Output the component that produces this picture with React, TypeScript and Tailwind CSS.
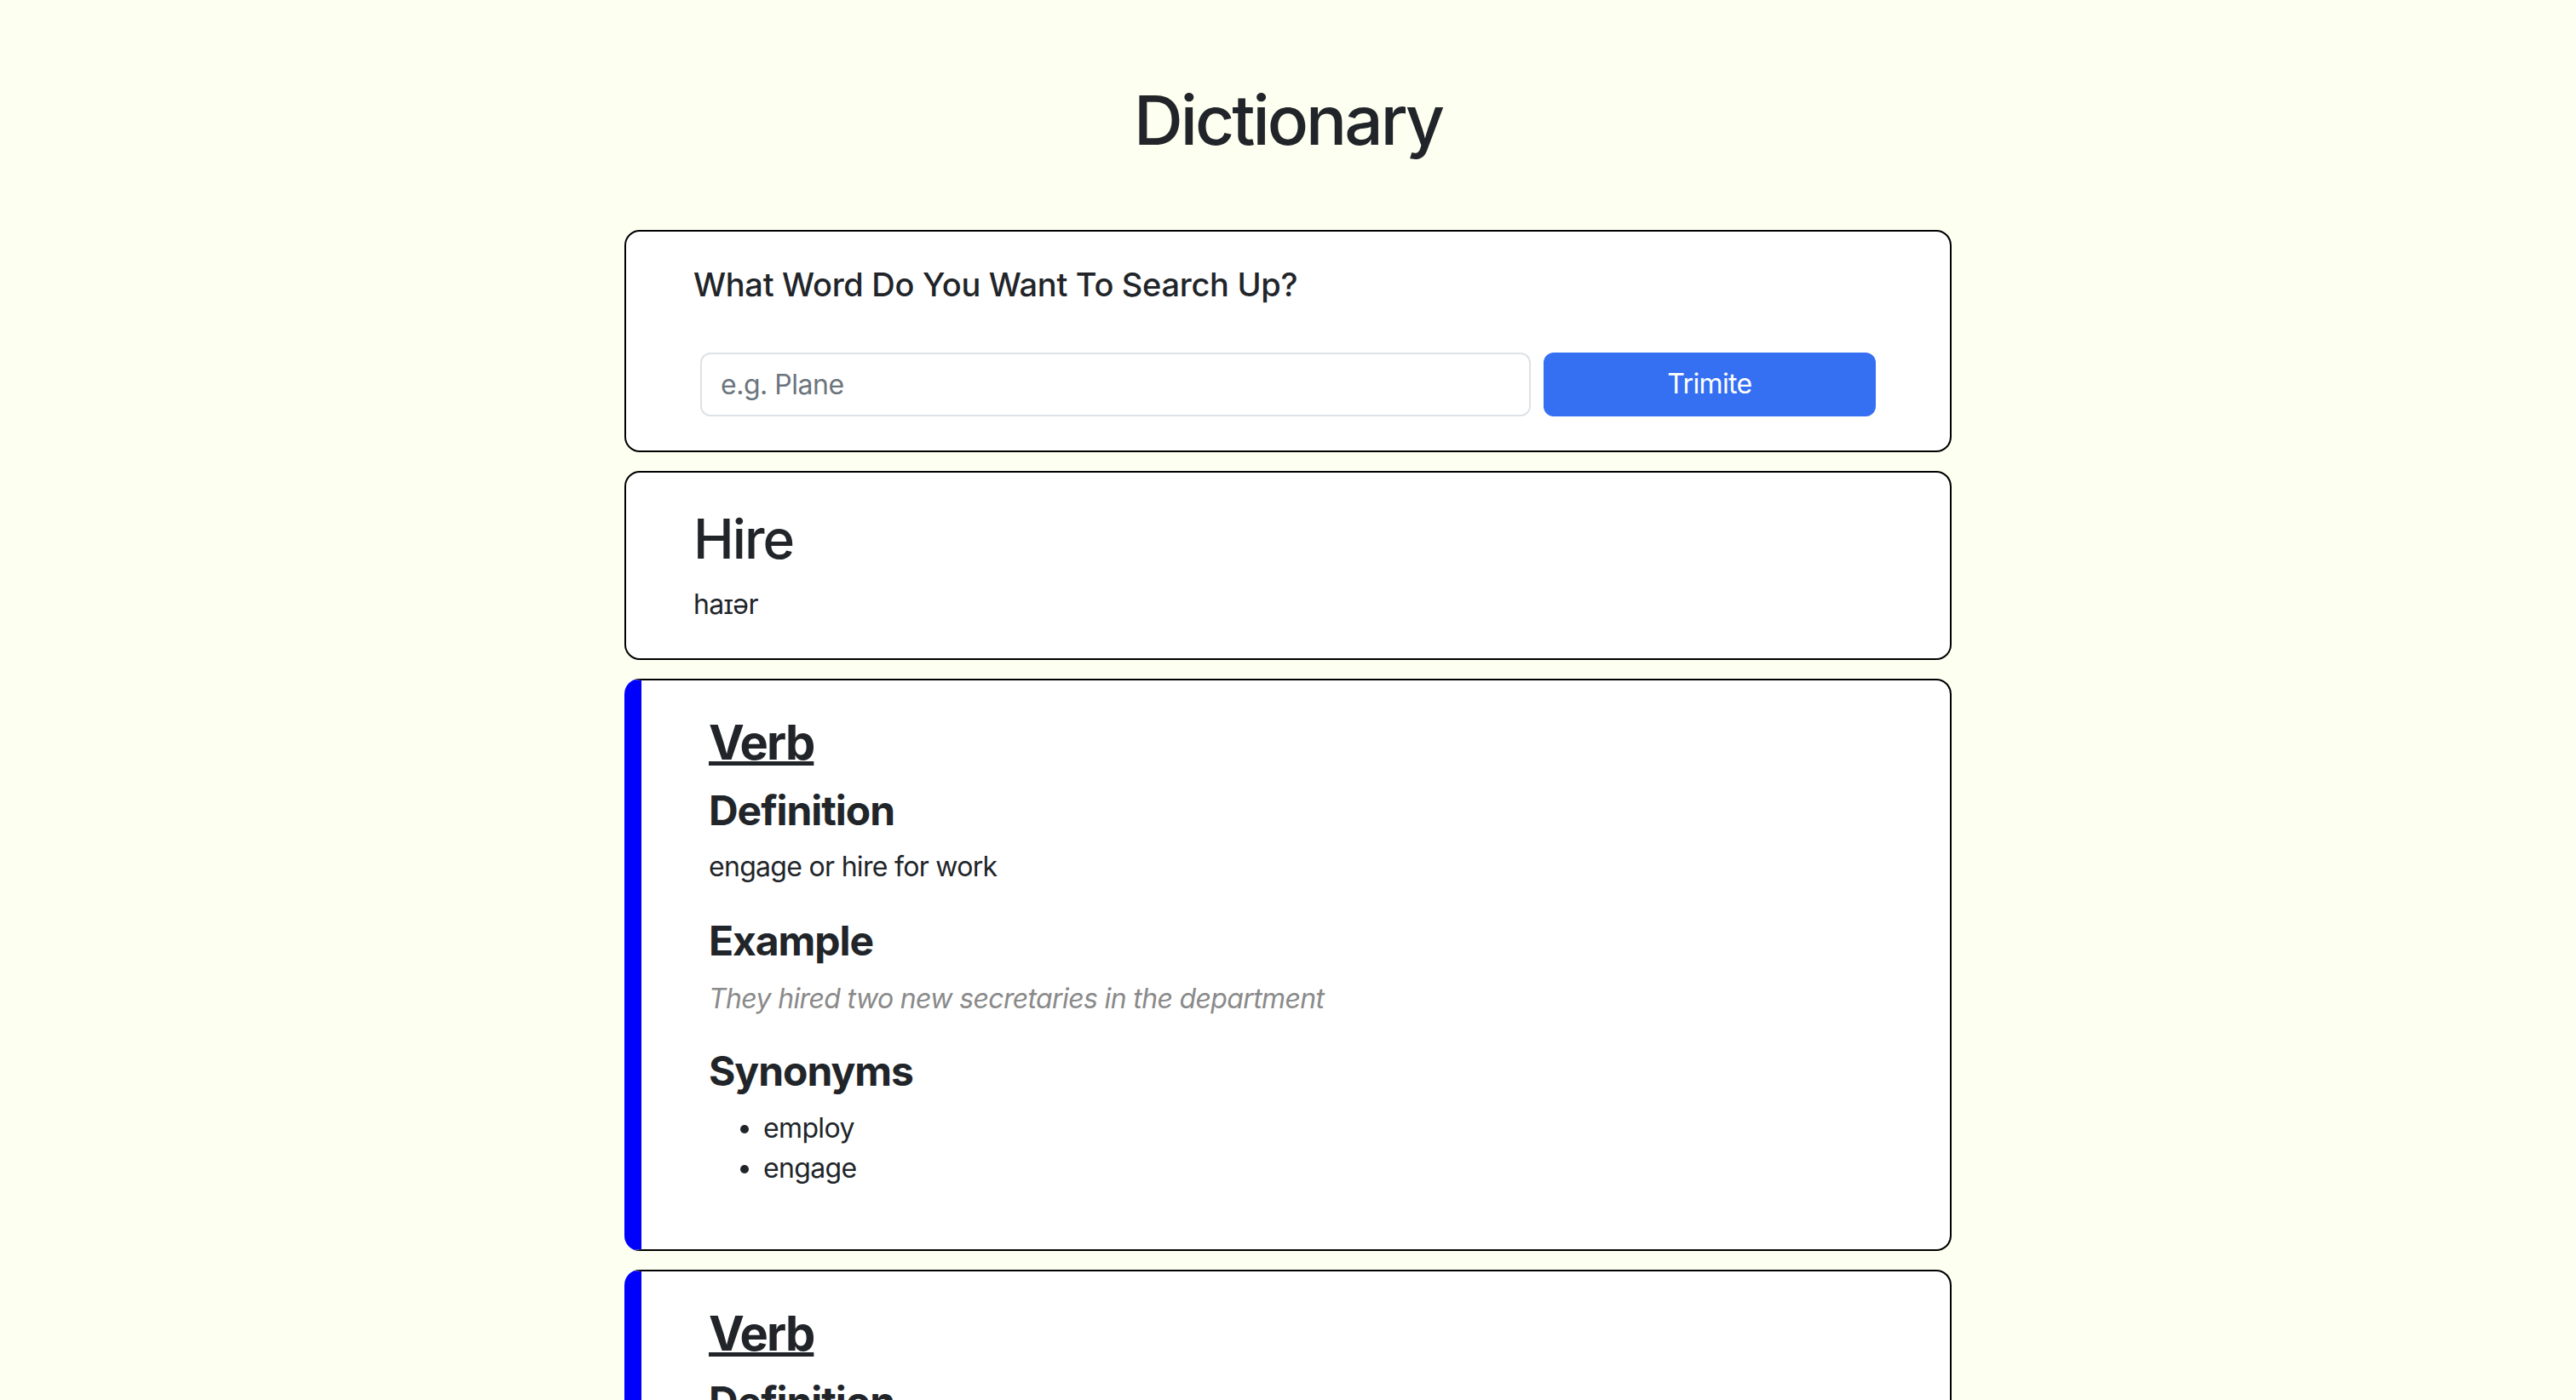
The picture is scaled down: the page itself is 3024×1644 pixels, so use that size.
interface Sense {
  partOfSpeech: string;
  definition: string;
  example: string;
  synonyms: string[];
}

const SENSES: Sense[] = [
  {
    partOfSpeech: "Verb",
    definition: "engage or hire for work",
    example: "They hired two new secretaries in the department",
    synonyms: ["employ", "engage"],
  },
  {
    partOfSpeech: "Verb",
    definition: "hold under a lease or rental agreement; of goods and services",
    example: "We hired a car for the weekend",
    synonyms: ["rent", "charter", "lease"],
  },
];

function SenseCard({ sense }: { sense: Sense }) {
  return (
    <section className="rounded-[18px] border-2 border-l-[20px] border-black border-l-[#0000ff] bg-white pt-[40px] pb-[72px] pl-[79px] pr-[80px]">
      <h3 className="text-[56px] font-bold leading-[1.2] tracking-[-0.033em] underline decoration-[5px] underline-offset-[2px]">
        {sense.partOfSpeech}
      </h3>
      <h4 className="mt-[16px] text-[48px] font-bold leading-[1.2] tracking-[-0.022em]">Definition</h4>
      <p className="mt-[14px] text-[32px] leading-[1.5] tracking-[-0.022em]">{sense.definition}</p>
      <h4 className="mt-[34px] text-[48px] font-bold leading-[1.2] tracking-[-0.022em]">Example</h4>
      <p className="mt-[15px] text-[32px] italic leading-[1.5] tracking-[-0.02em] text-[#8a8a8a]">{sense.example}</p>
      <h4 className="mt-[32px] text-[48px] font-bold leading-[1.2] tracking-[-0.022em]">Synonyms</h4>
      <ul className="mt-[15px] list-disc pl-[64px]">
        {sense.synonyms.map((s) => (
          <li key={s} className="text-[32px] leading-[47px] tracking-[-0.02em]">
            {s}
          </li>
        ))}
      </ul>
    </section>
  );
}

export default function App() {
  return (
    <div className="min-h-screen bg-[#fdfff0] font-['Inter',sans-serif] text-[#212529]">
      <h1 className="pt-[93px] text-center text-[80px] font-medium leading-[1.2] tracking-[-0.037em]">Dictionary</h1>

      <main className="mx-auto mt-[81px] flex w-[1558px] flex-col gap-[22px] pb-20">
        <section className="rounded-[18px] border-2 border-black bg-white pt-[40px] pb-[40px] pl-[79px] pr-[87px]">
          <h5 className="text-[38px] font-medium leading-[1.2] tracking-[-0.008em]">What Word Do You Want To Search Up?</h5>
          <form className="ml-[8px] mt-[56px] flex" onSubmit={(e) => e.preventDefault()}>
            <input
              type="text"
              placeholder="e.g. Plane"
              className="h-[75px] flex-1 rounded-[12px] border-2 border-[#dee2e6] bg-white px-[22px] text-[32px] tracking-[-0.015em] text-[#212529] outline-none placeholder:text-[#6c757d]"
            />
            <button
              type="submit"
              className="ml-[15px] h-[75px] w-[390px] rounded-[12px] bg-[#356ff2] text-[32px] tracking-[-0.02em] text-white"
            >
              Trimite
            </button>
          </form>
        </section>

        <section className="rounded-[18px] border-2 border-black bg-white pt-[40px] pb-[39px] pl-[79px]">
          <h2 className="text-[64px] font-medium leading-[1.2] tracking-[-0.03em]">Hire</h2>
          <p className="mt-[15px] text-[32px] leading-[1.5] tracking-[-0.02em]">haɪər</p>
        </section>

        {SENSES.map((sense, i) => (
          <SenseCard key={i} sense={sense} />
        ))}
      </main>
    </div>
  );
}
